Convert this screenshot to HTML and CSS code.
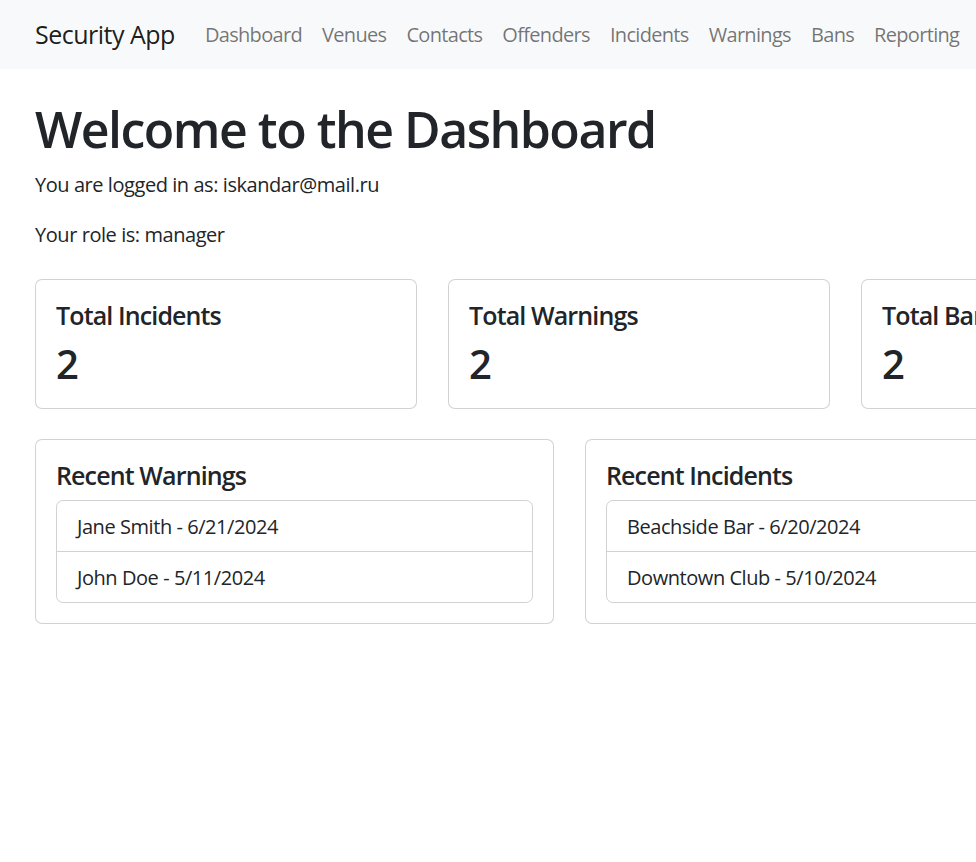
FILE: index.html
```html
<!DOCTYPE html>
<html lang="en">
<head>
<meta charset="utf-8">
<title>Security App</title>
<link rel="stylesheet" href="styles.css">
</head>
<body>
<nav class="navbar">
  <a class="brand" href="#">Security App</a>
  <ul class="nav-links">
    <li><a href="#">Dashboard</a></li>
    <li><a href="#">Venues</a></li>
    <li><a href="#">Contacts</a></li>
    <li><a href="#">Offenders</a></li>
    <li><a href="#">Incidents</a></li>
    <li><a href="#">Warnings</a></li>
    <li><a href="#">Bans</a></li>
    <li><a href="#">Reporting</a></li>
  </ul>
</nav>
<main class="container">
  <h1 class="title">Welcome to the Dashboard</h1>
  <p class="info">You are logged in as: iskandar@mail.ru</p>
  <p class="info">Your role is: manager</p>

  <div class="stats-row">
    <div class="card">
      <h5 class="card-title">Total Incidents</h5>
      <h2 class="card-number">2</h2>
    </div>
    <div class="card">
      <h5 class="card-title">Total Warnings</h5>
      <h2 class="card-number">2</h2>
    </div>
    <div class="card">
      <h5 class="card-title">Total Bans</h5>
      <h2 class="card-number">2</h2>
    </div>
  </div>

  <div class="recent-row">
    <div class="card">
      <h5 class="card-title">Recent Warnings</h5>
      <ul class="list-group">
        <li class="list-item">Jane Smith - 6/21/2024</li>
        <li class="list-item">John Doe - 5/11/2024</li>
      </ul>
    </div>
    <div class="card">
      <h5 class="card-title">Recent Incidents</h5>
      <ul class="list-group">
        <li class="list-item">Beachside Bar - 6/20/2024</li>
        <li class="list-item">Downtown Club - 5/10/2024</li>
      </ul>
    </div>
  </div>
</main>
</body>
</html>
```
FILE: styles.css
```css
* { box-sizing: border-box; }
html, body { overflow: hidden; }
body {
  margin: 0;
  font-family: "Open Sans", "Noto Sans", sans-serif;
  font-size: 20px;
  line-height: 1.5;
  color: #212529;
  background: #fff;
  letter-spacing: -0.022em;
}
.navbar {
  display: flex;
  align-items: center;
  height: 69px;
  padding: 0 35px;
  background: #f8f9fa;
  white-space: nowrap;
}
.brand {
  font-size: 25px;
  color: rgba(0,0,0,.9);
  text-decoration: none;
  margin-right: 20px;
  letter-spacing: -0.02em;
}
.nav-links {
  display: flex;
  list-style: none;
  margin: 0;
  padding: 0;
}
.nav-links a {
  display: block;
  padding: 0 10px;
  color: rgba(0,0,0,.55);
  text-decoration: none;
  letter-spacing: -0.034em;
}
.container {
  padding: 30px 35px 0;
}
.title {
  margin: 0 0 10px;
  font-size: 50px;
  font-weight: 600;
  line-height: 1.2;
  letter-spacing: -0.03em;
}
.info {
  margin: 0 0 19px;
  padding-top: 1px;
}
.stats-row {
  display: grid;
  grid-template-columns: repeat(3, 382px);
  gap: 31px;
  margin-top: 29px;
  margin-bottom: 30px;
}
.recent-row {
  display: grid;
  grid-template-columns: repeat(2, 519px);
  gap: 31px;
}
.card {
  border: 1px solid rgba(0,0,0,.175);
  border-radius: 7px;
  padding: 20px;
  background: #fff;
}
.card-title {
  margin: 0 0 10px;
  font-size: 25px;
  font-weight: 600;
  line-height: 1.2;
  letter-spacing: -0.035em;
}
.card-number {
  margin: 0;
  font-size: 40px;
  font-weight: 600;
  line-height: 1.2;
}
.list-group {
  list-style: none;
  margin: 0;
  padding: 0;
  border: 1px solid rgba(0,0,0,.175);
  border-radius: 7px;
}
.list-item {
  padding: 11px 20px 9px;
}
.list-item + .list-item {
  border-top: 1px solid rgba(0,0,0,.175);
}
```
